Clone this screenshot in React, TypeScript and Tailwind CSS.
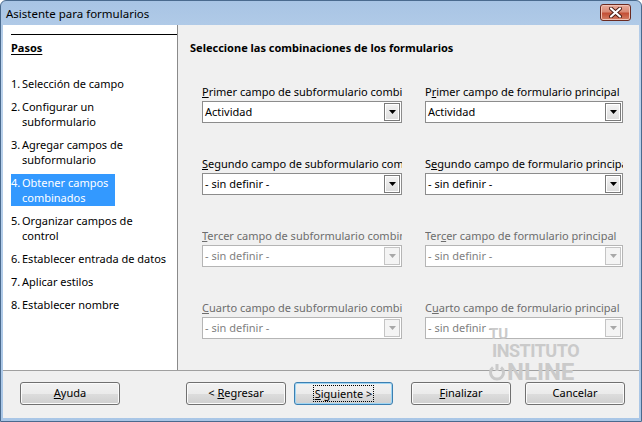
import clsx from 'clsx'

const steps: { n: string; lines: string[]; active?: boolean }[] = [
  { n: '1.', lines: ['Selección de campo'] },
  { n: '2.', lines: ['Configurar un', 'subformulario'] },
  { n: '3.', lines: ['Agregar campos de', 'subformulario'] },
  { n: '4.', lines: ['Obtener campos', 'combinados'], active: true },
  { n: '5.', lines: ['Organizar campos de', 'control'] },
  { n: '6.', lines: ['Establecer entrada de datos'] },
  { n: '7.', lines: ['Aplicar estilos'] },
  { n: '8.', lines: ['Establecer nombre'] },
]

function Combo({ value, disabled }: { value: string; disabled?: boolean }) {
  return (
    <div
      className={clsx(
        'mt-[1px] h-[22px] flex items-center bg-white border',
        disabled ? 'border-[#b5b5b5]' : 'border-[#8c8c8c]'
      )}
    >
      <span className={clsx('flex-1 pl-[2px] leading-[16px] whitespace-nowrap', disabled ? 'text-[#7f7f7f]' : 'text-black')}>
        {value}
      </span>
      <div
        className={clsx(
          'w-[16px] h-[18px] mr-[1px] flex items-center justify-center border',
          disabled
            ? 'border-[#c4c4c4] bg-[#f4f4f4]'
            : 'border-[#7a7a7a] bg-[linear-gradient(to_bottom,#f4f4f4,#dcdcdc)] shadow-[inset_0_0_0_1px_#ffffff]'
        )}
      >
        <svg width="7" height="4" viewBox="0 0 7 4">
          <path d="M0 0H7L3.5 4Z" fill={disabled ? '#a8a8a8' : '#000000'} />
        </svg>
      </div>
    </div>
  )
}

function Field({ label, value, disabled }: { label: React.ReactNode; value: string; disabled?: boolean }) {
  return (
    <div className="flex flex-col">
      <div className={clsx('h-[16px] leading-[16px] whitespace-nowrap overflow-hidden', disabled ? 'text-[#6d6d6d]' : 'text-black')}>
        {label}
      </div>
      <Combo value={value} disabled={disabled} />
    </div>
  )
}

function Btn({ children, className, focused }: { children: React.ReactNode; className?: string; focused?: boolean }) {
  return (
    <div
      className={clsx(
        'h-[23px] flex items-center justify-center rounded-[3px] border bg-[linear-gradient(to_bottom,#f2f2f2_0%,#ebebeb_50%,#dddddd_51%,#cfcfcf_100%)]',
        focused ? 'border-[#3c7fb1] shadow-[inset_0_0_0_1px_#9fd5f3]' : 'border-[#707070] shadow-[inset_0_0_0_1px_#fbfbfb]',
        className
      )}
    >
      {children}
    </div>
  )
}

export default function App() {
  return (
    <div className="w-[642px] h-[422px] relative flex flex-col border border-[#4a6a8e] rounded-t-[6px] overflow-hidden bg-[linear-gradient(to_bottom,#a8c4e4,#bcd3ec_60px,#a9c6e6)] font-['Noto_Sans',sans-serif] text-[11px] text-black">
      {/* title bar */}
      <div className="h-[24px] flex items-start">
        <span className="pl-[5px] pt-[5px] leading-[16px] text-[11.5px] text-black">Asistente para formularios</span>
        <div className="ml-auto mr-[10px] mt-[3px] w-[31px] h-[17px] rounded-[3px] border border-[#6b2a20] flex items-center justify-center bg-[linear-gradient(to_bottom,#e9ab9a_0%,#d98a76_45%,#c34f36_55%,#d37f66_100%)] shadow-[inset_0_0_0_1px_#f0c2b5]">
          <svg width="13" height="11" viewBox="0 0 13 11">
            <path d="M2 1.5L11 9.5M11 1.5L2 9.5" stroke="#4a1c14" strokeWidth="4" strokeLinecap="round" />
            <path d="M2 1.5L11 9.5M11 1.5L2 9.5" stroke="#ffffff" strokeWidth="2.2" strokeLinecap="round" />
          </svg>
        </div>
      </div>

      {/* client area */}
      <div className="flex-1 mx-[2px] mb-[3px] flex flex-col bg-[#f0f0f0]">
        <div className="flex-1 flex">
          {/* steps */}
          <div className="w-[175px] bg-white border-r border-[#8a8a8a] flex flex-col">
            <div className="mt-[9px] ml-[8px] border-t border-black" />
            <div className="mt-[5px] pl-[8px] h-[16px] leading-[16px] font-bold underline underline-offset-2">Pasos</div>
            <div className="mt-[20px] pl-[8px] flex flex-col gap-[8px]">
              {steps.map((s) => (
                <div
                  key={s.n}
                  className={clsx(
                    'flex leading-[15px] whitespace-nowrap',
                    s.active ? 'w-[104px] bg-[#3399ff] text-white py-[1px] -my-[1px]' : 'text-black'
                  )}
                >
                  <span className="w-[11px] shrink-0">{s.n}</span>
                  <span className="flex flex-col">
                    {s.lines.map((l) => (
                      <span key={l}>{l}</span>
                    ))}
                  </span>
                </div>
              ))}
            </div>
          </div>

          {/* combinations */}
          <div className="flex-1 pl-[12px] pt-[15px] flex flex-col">
            <div className="h-[16px] leading-[16px] font-bold">Seleccione las combinaciones de los formularios</div>
            <div className="mt-[28px] ml-[12px] grid grid-cols-[200px_198px] gap-x-[23px] gap-y-[33px]">
              <Field label={<><u>P</u>rimer campo de subformulario combinado</>} value="Actividad" />
              <Field label={<>P<u>r</u>imer campo de formulario principal</>} value="Actividad" />
              <Field label={<><u>S</u>egundo campo de subformulario combinado</>} value="- sin definir -" />
              <Field label={<>S<u>e</u>gundo campo de formulario principal combinado</>} value="- sin definir -" />
              <Field label={<><u>T</u>ercer campo de subformulario combinado</>} value="- sin definir -" disabled />
              <Field label={<>Ter<u>c</u>er campo de formulario principal</>} value="- sin definir -" disabled />
              <Field label={<><u>C</u>uarto campo de subformulario combinado</>} value="- sin definir -" disabled />
              <Field label={<>C<u>u</u>arto campo de formulario principal</>} value="- sin definir -" disabled />
            </div>
          </div>
        </div>

        {/* buttons */}
        <div className="h-[48px] border-t border-[#a0a0a0] flex items-start pt-[11px] pl-[17px]">
          <Btn className="w-[100px]">
            <span><u>A</u>yuda</span>
          </Btn>
          <Btn className="w-[100px] ml-[66px]">
            <span>&lt; <u>R</u>egresar</span>
          </Btn>
          <Btn className="w-[99px] ml-[8px]" focused>
            <span className="outline outline-1 outline-dotted outline-black px-[1px] leading-[15px]"><u>S</u>iguiente &gt;</span>
          </Btn>
          <Btn className="w-[100px] ml-[18px]">
            <span><u>F</u>inalizar</span>
          </Btn>
          <Btn className="w-[100px] ml-[14px]">
            <span>Cancelar</span>
          </Btn>
        </div>
      </div>

      {/* watermark */}
      <div className="absolute left-[487px] top-[326px] flex flex-col font-['Roboto',sans-serif] font-bold text-[#cacaca] leading-none pointer-events-none">
        <span className="text-[15px] ml-[1px]">TU</span>
        <span className="text-[18px] ml-[4px] tracking-[-0.5px]">INSTITUTO</span>
        <span className="text-[24px] flex items-center">
          <svg width="18" height="18" viewBox="0 0 18 18" className="mr-[1px]">
            <path d="M5 4.5A6.5 6.5 0 1 0 13 4.5" fill="none" stroke="#cacaca" strokeWidth="3" />
            <path d="M9 1V8" stroke="#cacaca" strokeWidth="3" />
          </svg>
          NLINE
        </span>
      </div>
    </div>
  )
}
